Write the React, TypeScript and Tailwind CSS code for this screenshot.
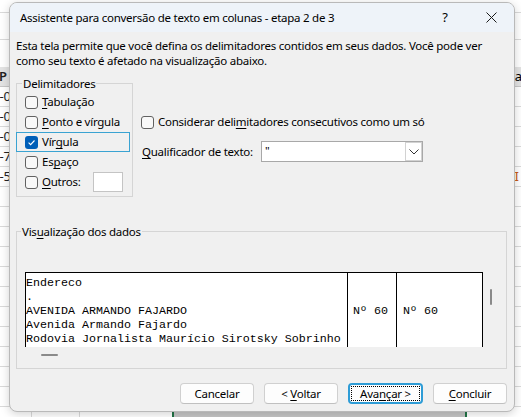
import React from "react";

function U({ children }: { children: React.ReactNode }) {
  return <span className="underline decoration-1 underline-offset-[2px]">{children}</span>;
}

function Box({ checked }: { checked?: boolean }) {
  if (checked) {
    return (
      <span className="w-[13px] h-[13px] rounded-[3px] bg-[#005fb8] flex items-center justify-center shrink-0">
        <svg width="9" height="9" viewBox="0 0 9 9">
          <path d="M1.6 4.7 L3.6 6.6 L7.5 2.5" stroke="white" strokeWidth="1.1" fill="none" />
        </svg>
      </span>
    );
  }
  return <span className="w-[13px] h-[13px] rounded-[3px] border border-[#616161] bg-[#f8f8f8] shrink-0" />;
}

function Row({ children, focused }: { children: React.ReactNode; focused?: boolean }) {
  return (
    <div
      className={
        "h-[20px] w-[114px] -ml-[6px] pl-[8px] flex items-center gap-[4px] border whitespace-nowrap " +
        (focused ? "border-[#3aa3d2]" : "border-transparent")
      }
    >
      {children}
    </div>
  );
}

function Btn({ children, focused }: { children: React.ReactNode; focused?: boolean }) {
  if (focused) {
    return (
      <div className="relative w-[75px] h-[21px] rounded-[4px] border-2 border-[#2e9cd6] bg-[#fdfdfd] flex items-center justify-center">
        <span className="absolute inset-[1px] border border-dotted border-black" />
        <span className="relative whitespace-pre">{children}</span>
      </div>
    );
  }
  return (
    <div className="w-[74px] h-[21px] rounded-[4px] border border-[#d0d0d0] border-b-[#c0c0c0] bg-[#fdfdfd] flex items-center justify-center">
      <span className="whitespace-pre">{children}</span>
    </div>
  );
}

export default function App() {
  const left = ["0-0", "0-0", "0-0", "0-7", "0-5", "", "", "", "", "", "", "", "", "", "", "", ""];
  return (
    <div className="relative w-[521px] h-[417px] overflow-hidden bg-white font-['Noto_Sans','Segoe_UI',sans-serif] text-[11.5px] tracking-[-0.25px] text-black">
      {/* spreadsheet behind */}
      <div className="absolute inset-0 flex flex-col tracking-normal">
        <div className="h-[13px] shrink-0 border-b border-[#dadada]" />
        <div className="h-[27px] shrink-0 border-b border-[#dadada]" />
        <div className="h-[27px] shrink-0" />
        <div className="h-[20px] shrink-0 bg-[#e3e3e3] border-b border-[#c6c6c6] flex items-center justify-between text-[13px]">
          <span className="-ml-[1px] font-semibold text-[#222]">P</span>
          <span className="-mr-[1px]">a</span>
        </div>
        {left.map((t, i) => (
          <div key={i} className="h-[20px] shrink-0 border-b border-[#dadada] flex items-center justify-between text-[13px]">
            <span className="-ml-[8px] text-[#222]">{t}</span>
            {i === 4 ? <span className="mr-[2px] text-[#c65911]">I</span> : <span />}
          </div>
        ))}
      </div>
      <div className="absolute left-0 right-0 top-[412px] h-[5px] flex">
        <div className="w-[32px] border-r border-[#dadada]" />
        <div className="w-[48px] border-r border-[#dadada]" />
        <div className="w-[94px] border-r-2 border-[#217346]" />
        <div className="w-[293px] bg-[#c6c6c6] border-r-2 border-[#217346]" />
      </div>

      {/* dialog window */}
      <div className="absolute left-[9px] top-[2px] w-[506px] h-[410px] rounded-[8px] border border-[#b9b9b9] bg-[#f0f0f0] overflow-hidden flex flex-col shadow-[0_2px_10px_rgba(0,0,0,0.18)]">
        <div className="h-[29px] shrink-0 bg-[#eef3f9] flex items-center pl-[10px] whitespace-nowrap">
          <span className="flex-1">Assistente para conversão de texto em colunas - etapa 2 de 3</span>
          <span className="w-[46px] text-center text-[13px]">?</span>
          <span className="w-[46px] flex items-center justify-center">
            <svg width="11" height="11" viewBox="0 0 11 11">
              <path d="M0.5 0.5 L10.5 10.5 M10.5 0.5 L0.5 10.5" stroke="#1a1a1a" strokeWidth="1" />
            </svg>
          </span>
        </div>

        <div className="flex-1 flex flex-col px-[6px]">
          <p className="mt-[6px] leading-[15px] whitespace-nowrap">
            Esta tela permite que você defina os delimitadores contidos em seus dados. Você pode ver
            <br />
            como seu texto é afetado na visualização abaixo.
          </p>

          <div className="mt-[8px] h-[148px] shrink-0 flex items-start">
            <fieldset className="w-[117px] h-[121px] border border-[#d5d5d5] pl-[5px]">
              <legend className="px-[1px] leading-[15px]">Delimitadores</legend>
              <div className="mt-[1px] flex flex-col">
                <Row>
                  <Box />
                  <span>
                    <U>T</U>abulação
                  </span>
                </Row>
                <Row>
                  <Box />
                  <span>
                    <U>P</U>onto e vírgula
                  </span>
                </Row>
                <Row focused>
                  <Box checked />
                  <span>
                    Vír<U>g</U>ula
                  </span>
                </Row>
                <Row>
                  <Box />
                  <span>
                    Es<U>p</U>aço
                  </span>
                </Row>
                <Row>
                  <Box />
                  <span>
                    <U>O</U>utros:
                  </span>
                  <span className="ml-auto mr-[6px] w-[30px] h-[20px] bg-white border border-[#c4c4c4]" />
                </Row>
              </div>
            </fieldset>

            <div className="ml-[8px] flex flex-col whitespace-nowrap">
              <div className="mt-[36px] h-[20px] flex items-center gap-[4px]">
                <Box />
                <span>
                  Considerar deli<U>m</U>itadores consecutivos como um só
                </span>
              </div>
              <div className="mt-[9px] h-[21px] flex items-center">
                <span className="w-[120px] pl-[1px]">
                  <U>Q</U>ualificador de texto:
                </span>
                <div className="w-[162px] h-[21px] bg-white border border-[#a8a8a8] flex items-stretch">
                  <span className="flex-1 pl-[3px] leading-[17px]">"</span>
                  <span className="w-[17px] border border-[#d2d2d2] flex items-center justify-center">
                    <svg width="10" height="6" viewBox="0 0 10 6">
                      <path d="M0.5 0.5 L5 5 L9.5 0.5" stroke="#333" strokeWidth="1" fill="none" />
                    </svg>
                  </span>
                </div>
              </div>
            </div>
          </div>

          <fieldset className="w-[491px] shrink-0 border border-[#d5d5d5] pl-[4px] pb-[6px]">
            <legend className="px-[1px] leading-[15px]">
              Vis<U>u</U>alização dos dados
            </legend>
            <div className="mt-[33px] ml-[4px] w-[474px] h-[90px] flex flex-col">
              <div className="h-[75px] flex">
                <div className="w-[458px] h-[75px] bg-white border-l border-t border-r border-black flex font-['Liberation_Mono',monospace] text-[11.67px] tracking-normal leading-[14px] whitespace-pre overflow-hidden">
                  <div className="w-[322px] border-r border-black pt-[3px]">
                    <div>Endereco</div>
                    <div>.</div>
                    <div>AVENIDA ARMANDO FAJARDO</div>
                    <div>Avenida Armando Fajardo</div>
                    <div>Rodovia Jornalista Maurício Sirotsky Sobrinho</div>
                  </div>
                  <div className="w-[49px] border-r border-black pt-[3px] pl-[5px]">
                    <div> </div>
                    <div> </div>
                    <div>Nº 60</div>
                  </div>
                  <div className="w-[85px] pt-[3px] pl-[6px]">
                    <div> </div>
                    <div> </div>
                    <div>Nº 60</div>
                  </div>
                </div>
                <div className="flex-1 flex justify-center">
                  <div className="mt-[17px] w-[2px] h-[16px] rounded-full bg-[#8a8a8a]" />
                </div>
              </div>
              <div className="h-[15px] flex items-center pl-[16px]">
                <div className="w-[17px] h-[2px] rounded-full bg-[#8a8a8a]" />
              </div>
            </div>
          </fieldset>

          <div className="mt-[14px] flex justify-end items-center gap-[10px] pr-[1px]">
            <Btn>Cancelar</Btn>
            <Btn>
              {"< "}
              <U>V</U>oltar
            </Btn>
            <Btn focused>
              Ava<U>n</U>çar {">"}
            </Btn>
            <Btn>
              <U>C</U>oncluir
            </Btn>
          </div>
        </div>
      </div>
    </div>
  );
}
